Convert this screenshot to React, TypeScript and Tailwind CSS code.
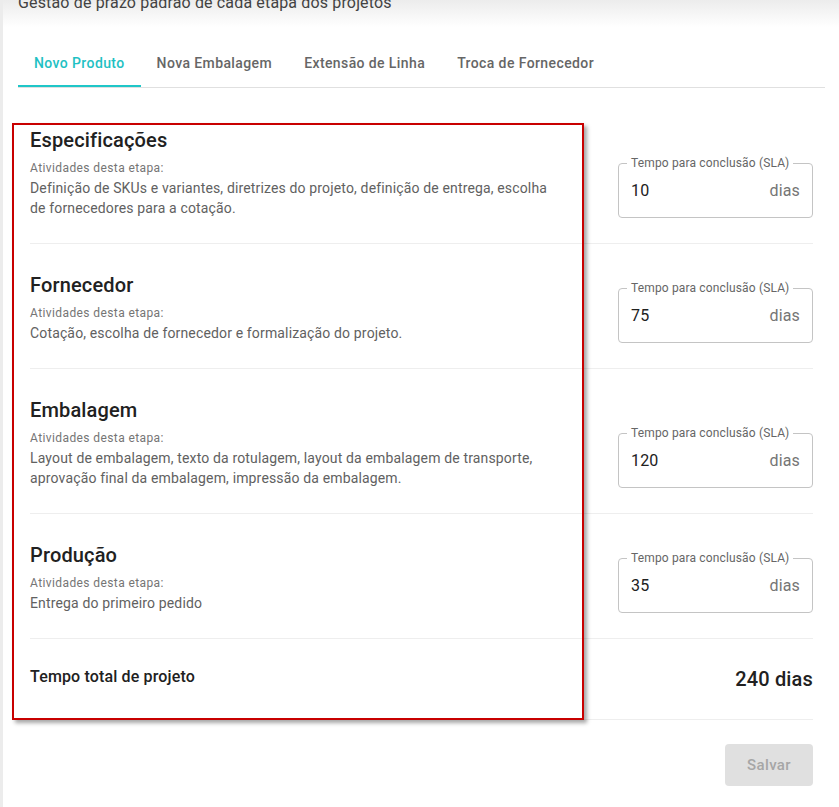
import React from "react";

type Stage = { title: string; desc: string; value: string };

const stages: Stage[] = [
  {
    title: "Especificações",
    desc: "Definição de SKUs e variantes, diretrizes do projeto, definição de entrega, escolha de fornecedores para a cotação.",
    value: "10",
  },
  {
    title: "Fornecedor",
    desc: "Cotação, escolha de fornecedor e formalização do projeto.",
    value: "75",
  },
  {
    title: "Embalagem",
    desc: "Layout de embalagem, texto da rotulagem, layout da embalagem de transporte, aprovação final da embalagem, impressão da embalagem.",
    value: "120",
  },
  {
    title: "Produção",
    desc: "Entrega do primeiro pedido",
    value: "35",
  },
];

const tabs = ["Novo Produto", "Nova Embalagem", "Extensão de Linha", "Troca de Fornecedor"];

function SlaField({ value }: { value: string }) {
  return (
    <div className="relative w-[195px] h-[55px] shrink-0 rounded-[4px] border border-[#c4c4c4] flex items-center justify-between pl-[12px] pr-[12px]">
      <span className="absolute -top-[9px] left-[8px] bg-white px-[4px] text-[12px] leading-[16px] tracking-[0.15px] text-[#666]">
        Tempo para conclusão (SLA)
      </span>
      <span className="text-[16px] tracking-[0.15px] text-[#212121]">{value}</span>
      <span className="text-[16px] tracking-[0.15px] text-[#757575]">dias</span>
    </div>
  );
}

export default function App() {
  return (
    <div className="min-h-[807px] bg-[#ececec] pl-[3px] font-['Roboto','Noto_Sans',sans-serif]">
      <div className="relative min-h-[807px] bg-white overflow-hidden">
        <div className="flex items-start h-[39px] bg-[linear-gradient(#ececec,#ffffff_70%)] px-[15px]">
          <div className="-mt-[9px] text-[16px] leading-[24px] tracking-[0.15px] text-[#424242]">
            Gestão de prazo padrão de cada etapa dos projetos
          </div>
        </div>
        <div className="pl-[15px] pr-[14px]">
          <div className="flex border-b border-[#e0e0e0]">
            {tabs.map((t, i) => (
              <div
                key={t}
                className={
                  i === 0
                    ? "h-[48px] px-4 pt-[2px] flex items-center text-[14px] font-medium tracking-[0.4px] text-[#1fc1c3] border-b-2 border-[#1fc6c8]"
                    : "h-[48px] px-4 flex items-center text-[14px] font-medium tracking-[0.4px] text-[#666]"
                }
              >
                {t}
              </div>
            ))}
          </div>
          <div className="mx-[12px] mt-[11px]">
            {stages.map((s) => (
              <div key={s.title} className="flex items-end justify-between pt-[25px] pb-[25px] border-b border-[#eeeeee]">
                <div className="w-[530px]">
                  <div className="text-[20px] leading-[32px] font-medium tracking-[0.15px] text-[#212121]">{s.title}</div>
                  <div className="mt-[2px] text-[12px] leading-[20px] tracking-[0.4px] text-[#757575]">Atividades desta etapa:</div>
                  <div className="text-[14px] leading-[20px] tracking-[0.15px] text-[#616161]">{s.desc}</div>
                </div>
                <SlaField value={s.value} />
              </div>
            ))}
            <div className="flex items-center justify-between h-[81px] border-b border-[#eeeeee]">
              <div className="text-[16px] font-medium tracking-[0.15px] text-[#212121] -mt-[5px]">Tempo total de projeto</div>
              <div className="text-[20px] font-medium tracking-[0.15px] text-[#212121]">240 dias</div>
            </div>
            <div className="flex justify-end pt-[24px]">
              <button className="w-[88px] h-[42px] rounded-[4px] bg-[#e0e0e0] text-[15px] font-medium tracking-[0.4px] text-[#a6a6a6]">
                Salvar
              </button>
            </div>
          </div>
        </div>
        <div className="absolute left-[9px] top-[123px] w-[572px] h-[597px] border-2 border-[#c80000] shadow-[3px_3px_4px_rgba(0,0,0,0.35)] pointer-events-none" />
      </div>
    </div>
  );
}
